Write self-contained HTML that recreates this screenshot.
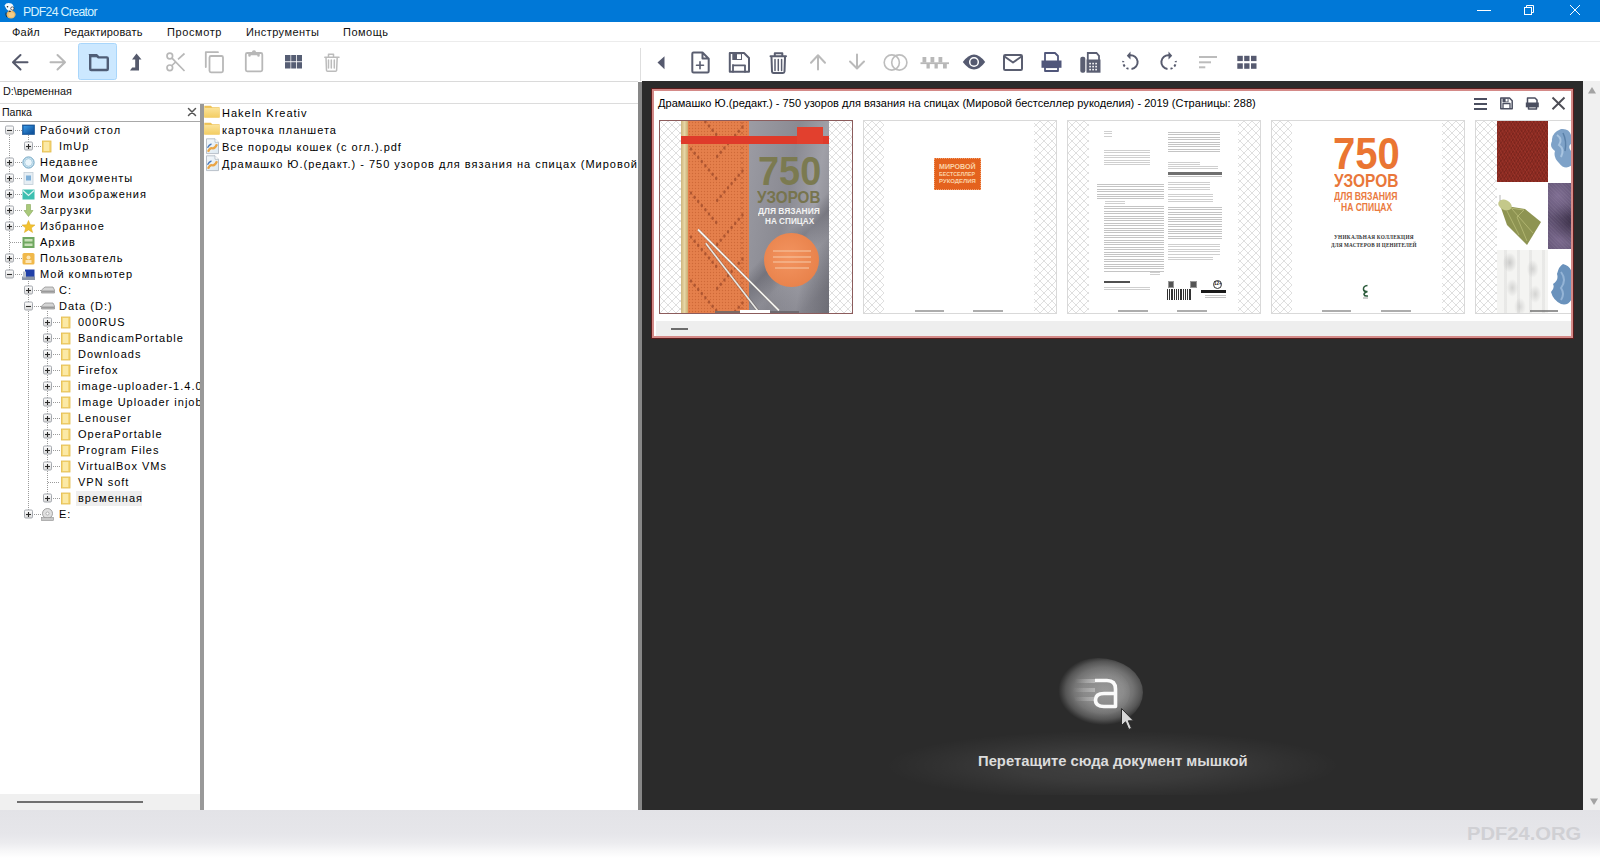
<!DOCTYPE html>
<html><head><meta charset="utf-8">
<style>
*{margin:0;padding:0;box-sizing:border-box}
html,body{width:1600px;height:860px;overflow:hidden;background:#fff;font-family:"Liberation Sans",sans-serif;color:#000}
.a{position:absolute}
#title{left:0;top:0;width:1600px;height:22px;background:#0078d7}
#title .t{left:23px;top:5px;font-size:12.3px;letter-spacing:-0.68px;color:#d6f3ff;white-space:nowrap}
#menu{left:0;top:22px;width:1600px;height:20px;background:#fff;border-bottom:1px solid #ececec}
#menu span{position:absolute;top:4px;font-size:11px;letter-spacing:0.2px;color:#111;white-space:nowrap}
#tbL{left:0;top:42px;width:638px;height:40px;background:#fff;border-bottom:1px solid #dadada}
#tbR{left:642px;top:42px;width:958px;height:39px;background:#fff}
#addr{left:0;top:82px;width:638px;height:22px;background:#fff;border-bottom:1px solid #dcdcdc}
#addr span{position:absolute;left:3px;top:3px;font-size:10.8px;color:#111}
#tree{left:0;top:104px;width:200px;height:706px;background:#fff;overflow:hidden}
#treehdr{left:0;top:0;width:200px;height:18px;border-bottom:1px solid #a8a8a8}
#treehdr span{position:absolute;left:2px;top:2px;font-size:10.6px;color:#111}
#split1{left:200px;top:104px;width:4px;height:706px;background:#999}
#files{left:204px;top:104px;width:434px;height:706px;background:#fff;overflow:hidden}
#split2{left:638px;top:82px;width:4px;height:728px;background:#878787}
#dark{left:642px;top:81px;width:941px;height:729px;background:#2b2b2b;overflow:hidden}
#vscroll{left:1583px;top:81px;width:17px;height:729px;background:#f0f0f0}
#status{left:0;top:810px;width:1600px;height:50px;background:linear-gradient(#e3e3e7 0px,#e6e6ea 24px,#ececef 33px,#f7f7f8 41px,#fff 48px)}
#hs{left:0;top:794px;width:200px;height:16px;background:#f0f0f0}
.tt{position:absolute;font-size:11px;letter-spacing:1.0px;color:#000;white-space:nowrap}
</style></head><body>
<div id="title" class="a"><span class="t a">PDF24 Creator</span></div>
<div id="menu" class="a">
<span style="left:12px">Файл</span><span style="left:64px">Редактировать</span><span style="left:167px;letter-spacing:0.6px">Просмотр</span><span style="left:246px;letter-spacing:0.42px">Инструменты</span><span style="left:343px;letter-spacing:0.5px">Помощь</span>
</div>
<div id="tbL" class="a"></div>
<div id="tbR" class="a"></div>
<div id="addr" class="a"><span>D:\временная</span></div>
<div id="tree" class="a">
 <div id="treehdr" class="a"><span>Папка</span></div>
<svg class="a" style="left:0;top:0" width="200" height="706"><defs><linearGradient id="bg" x1="0" y1="0" x2="0" y2="1"><stop offset="0" stop-color="#fff"/><stop offset="1" stop-color="#dcdcdc"/></linearGradient><linearGradient id="dk" x1="0" y1="0" x2="1" y2="1"><stop offset="0" stop-color="#3a9ae8"/><stop offset="1" stop-color="#0c4a90"/></linearGradient></defs><line x1="9.5" y1="31" x2="9.5" y2="170.5" stroke="#9a9a9a" stroke-width="1" stroke-dasharray="1 1"/><line x1="28.5" y1="31" x2="28.5" y2="38.5" stroke="#9a9a9a" stroke-width="1" stroke-dasharray="1 1"/><line x1="28.5" y1="175" x2="28.5" y2="410.5" stroke="#9a9a9a" stroke-width="1" stroke-dasharray="1 1"/><line x1="47.5" y1="207" x2="47.5" y2="394.5" stroke="#9a9a9a" stroke-width="1" stroke-dasharray="1 1"/><line x1="15" y1="26.5" x2="22" y2="26.5" stroke="#9a9a9a" stroke-width="1" stroke-dasharray="1 1"/><rect x="5.5" y="22.0" width="8" height="8" fill="url(#bg)" stroke="#a4a8ae" rx="1.2"/><path d="M7 26.5H12" stroke="#2a2a2a" stroke-width="1.1"/><rect x="22.5" y="21.0" width="12" height="9.5" fill="#0f5aa8" stroke="#2a5f98" stroke-width="0.8"/><rect x="23.5" y="22.0" width="10" height="7.5" fill="url(#dk)"/><line x1="34" y1="42.5" x2="41" y2="42.5" stroke="#9a9a9a" stroke-width="1" stroke-dasharray="1 1"/><rect x="24.5" y="38.0" width="8" height="8" fill="url(#bg)" stroke="#a4a8ae" rx="1.2"/><path d="M26 42.5H31" stroke="#2a2a2a" stroke-width="1.1"/><path d="M28.5 40.0V45.0" stroke="#2a2a2a" stroke-width="1.1"/><rect x="42.5" y="37.0" width="8.5" height="11" fill="#f6d879" stroke="#e2b94a" stroke-width="0.8"/><rect x="44" y="38.0" width="5" height="9" fill="#fbe9a6"/><line x1="15" y1="58.5" x2="22" y2="58.5" stroke="#9a9a9a" stroke-width="1" stroke-dasharray="1 1"/><rect x="5.5" y="54.0" width="8" height="8" fill="url(#bg)" stroke="#a4a8ae" rx="1.2"/><path d="M7 58.5H12" stroke="#2a2a2a" stroke-width="1.1"/><path d="M9.5 56.0V61.0" stroke="#2a2a2a" stroke-width="1.1"/><circle cx="28.5" cy="58.5" r="5.6" fill="#cfe6f2" stroke="#6da3c2" stroke-width="1"/><circle cx="28.5" cy="58.5" r="3.8" fill="#eaf5fb" stroke="#8ab8d2" stroke-width="0.6"/><line x1="15" y1="74.5" x2="22" y2="74.5" stroke="#9a9a9a" stroke-width="1" stroke-dasharray="1 1"/><rect x="5.5" y="70.0" width="8" height="8" fill="url(#bg)" stroke="#a4a8ae" rx="1.2"/><path d="M7 74.5H12" stroke="#2a2a2a" stroke-width="1.1"/><path d="M9.5 72.0V77.0" stroke="#2a2a2a" stroke-width="1.1"/><rect x="24" y="68.5" width="9" height="12" fill="#e6eef4" stroke="#c0ccd6" stroke-width="0.8"/><rect x="26" y="71.5" width="5" height="5" fill="#7fb0d8"/><line x1="15" y1="90.5" x2="22" y2="90.5" stroke="#9a9a9a" stroke-width="1" stroke-dasharray="1 1"/><rect x="5.5" y="86.0" width="8" height="8" fill="url(#bg)" stroke="#a4a8ae" rx="1.2"/><path d="M7 90.5H12" stroke="#2a2a2a" stroke-width="1.1"/><path d="M9.5 88.0V93.0" stroke="#2a2a2a" stroke-width="1.1"/><rect x="22.5" y="85.5" width="12" height="10" fill="#3cbfb0"/><path d="M23 86.5L28.5 91.5L34 86.5" fill="none" stroke="#dff5f2" stroke-width="1.2"/><line x1="15" y1="106.5" x2="22" y2="106.5" stroke="#9a9a9a" stroke-width="1" stroke-dasharray="1 1"/><rect x="5.5" y="102.0" width="8" height="8" fill="url(#bg)" stroke="#a4a8ae" rx="1.2"/><path d="M7 106.5H12" stroke="#2a2a2a" stroke-width="1.1"/><path d="M9.5 104.0V109.0" stroke="#2a2a2a" stroke-width="1.1"/><path d="M26.5 100.5H30.5V106.5H33L28.5 112.5L24 106.5H26.5Z" fill="#a9c97a" stroke="#86a85a" stroke-width="0.6"/><line x1="15" y1="122.5" x2="22" y2="122.5" stroke="#9a9a9a" stroke-width="1" stroke-dasharray="1 1"/><rect x="5.5" y="118.0" width="8" height="8" fill="url(#bg)" stroke="#a4a8ae" rx="1.2"/><path d="M7 122.5H12" stroke="#2a2a2a" stroke-width="1.1"/><path d="M9.5 120.0V125.0" stroke="#2a2a2a" stroke-width="1.1"/><path d="M28.5 116.5L30.3 120.8L35 121.0L31.3 123.9L32.6 128.5L28.5 125.9L24.4 128.5L25.7 123.9L22 121.0L26.7 120.8Z" fill="#f2c230" stroke="#d9a520" stroke-width="0.5"/><line x1="10" y1="138.5" x2="22" y2="138.5" stroke="#9a9a9a" stroke-width="1" stroke-dasharray="1 1"/><rect x="22.5" y="133.0" width="12" height="11" fill="#6fa760"/><rect x="24.5" y="135.0" width="8" height="2.5" fill="#c9e0b8"/><rect x="24.5" y="139.5" width="8" height="2.5" fill="#c9e0b8"/><line x1="15" y1="154.5" x2="22" y2="154.5" stroke="#9a9a9a" stroke-width="1" stroke-dasharray="1 1"/><rect x="5.5" y="150.0" width="8" height="8" fill="url(#bg)" stroke="#a4a8ae" rx="1.2"/><path d="M7 154.5H12" stroke="#2a2a2a" stroke-width="1.1"/><path d="M9.5 152.0V157.0" stroke="#2a2a2a" stroke-width="1.1"/><rect x="22.5" y="149.0" width="12" height="11.5" rx="1.5" fill="#f0b84a"/><circle cx="28.5" cy="153.5" r="2" fill="#fbe6b8"/><rect x="25.5" y="156.0" width="6" height="3" fill="#fbe6b8"/><line x1="15" y1="170.5" x2="22" y2="170.5" stroke="#9a9a9a" stroke-width="1" stroke-dasharray="1 1"/><rect x="5.5" y="166.0" width="8" height="8" fill="url(#bg)" stroke="#a4a8ae" rx="1.2"/><path d="M7 170.5H12" stroke="#2a2a2a" stroke-width="1.1"/><rect x="25" y="165.5" width="9.5" height="7.5" fill="#1f3fa8"/><rect x="22" y="172.5" width="13" height="3.5" fill="#8a95a8"/><rect x="23" y="167.5" width="3" height="6" fill="#b8c0cc"/><line x1="34" y1="186.5" x2="41" y2="186.5" stroke="#9a9a9a" stroke-width="1" stroke-dasharray="1 1"/><rect x="24.5" y="182.0" width="8" height="8" fill="url(#bg)" stroke="#a4a8ae" rx="1.2"/><path d="M26 186.5H31" stroke="#2a2a2a" stroke-width="1.1"/><path d="M28.5 184.0V189.0" stroke="#2a2a2a" stroke-width="1.1"/><path d="M41.5 186.0L45 183.0H53L54.5 186.0V189.0H41.5Z" fill="#d4d4d4" stroke="#8a8a8a" stroke-width="0.7"/><rect x="42" y="186.5" width="12" height="2" fill="#9a9a9a"/><line x1="34" y1="202.5" x2="41" y2="202.5" stroke="#9a9a9a" stroke-width="1" stroke-dasharray="1 1"/><rect x="24.5" y="198.0" width="8" height="8" fill="url(#bg)" stroke="#a4a8ae" rx="1.2"/><path d="M26 202.5H31" stroke="#2a2a2a" stroke-width="1.1"/><path d="M41.5 202.0L45 199.0H53L54.5 202.0V205.0H41.5Z" fill="#d4d4d4" stroke="#8a8a8a" stroke-width="0.7"/><rect x="42" y="202.5" width="12" height="2" fill="#9a9a9a"/><line x1="53" y1="218.5" x2="60" y2="218.5" stroke="#9a9a9a" stroke-width="1" stroke-dasharray="1 1"/><rect x="43.5" y="214.0" width="8" height="8" fill="url(#bg)" stroke="#a4a8ae" rx="1.2"/><path d="M45 218.5H50" stroke="#2a2a2a" stroke-width="1.1"/><path d="M47.5 216.0V221.0" stroke="#2a2a2a" stroke-width="1.1"/><rect x="61.5" y="213.0" width="8.5" height="11" fill="#f6d879" stroke="#e2b94a" stroke-width="0.8"/><rect x="63" y="214.0" width="5" height="9" fill="#fbe9a6"/><line x1="53" y1="234.5" x2="60" y2="234.5" stroke="#9a9a9a" stroke-width="1" stroke-dasharray="1 1"/><rect x="43.5" y="230.0" width="8" height="8" fill="url(#bg)" stroke="#a4a8ae" rx="1.2"/><path d="M45 234.5H50" stroke="#2a2a2a" stroke-width="1.1"/><path d="M47.5 232.0V237.0" stroke="#2a2a2a" stroke-width="1.1"/><rect x="61.5" y="229.0" width="8.5" height="11" fill="#f6d879" stroke="#e2b94a" stroke-width="0.8"/><rect x="63" y="230.0" width="5" height="9" fill="#fbe9a6"/><line x1="53" y1="250.5" x2="60" y2="250.5" stroke="#9a9a9a" stroke-width="1" stroke-dasharray="1 1"/><rect x="43.5" y="246.0" width="8" height="8" fill="url(#bg)" stroke="#a4a8ae" rx="1.2"/><path d="M45 250.5H50" stroke="#2a2a2a" stroke-width="1.1"/><path d="M47.5 248.0V253.0" stroke="#2a2a2a" stroke-width="1.1"/><rect x="61.5" y="245.0" width="8.5" height="11" fill="#f6d879" stroke="#e2b94a" stroke-width="0.8"/><rect x="63" y="246.0" width="5" height="9" fill="#fbe9a6"/><line x1="53" y1="266.5" x2="60" y2="266.5" stroke="#9a9a9a" stroke-width="1" stroke-dasharray="1 1"/><rect x="43.5" y="262.0" width="8" height="8" fill="url(#bg)" stroke="#a4a8ae" rx="1.2"/><path d="M45 266.5H50" stroke="#2a2a2a" stroke-width="1.1"/><path d="M47.5 264.0V269.0" stroke="#2a2a2a" stroke-width="1.1"/><rect x="61.5" y="261.0" width="8.5" height="11" fill="#f6d879" stroke="#e2b94a" stroke-width="0.8"/><rect x="63" y="262.0" width="5" height="9" fill="#fbe9a6"/><line x1="53" y1="282.5" x2="60" y2="282.5" stroke="#9a9a9a" stroke-width="1" stroke-dasharray="1 1"/><rect x="43.5" y="278.0" width="8" height="8" fill="url(#bg)" stroke="#a4a8ae" rx="1.2"/><path d="M45 282.5H50" stroke="#2a2a2a" stroke-width="1.1"/><path d="M47.5 280.0V285.0" stroke="#2a2a2a" stroke-width="1.1"/><rect x="61.5" y="277.0" width="8.5" height="11" fill="#f6d879" stroke="#e2b94a" stroke-width="0.8"/><rect x="63" y="278.0" width="5" height="9" fill="#fbe9a6"/><line x1="53" y1="298.5" x2="60" y2="298.5" stroke="#9a9a9a" stroke-width="1" stroke-dasharray="1 1"/><rect x="43.5" y="294.0" width="8" height="8" fill="url(#bg)" stroke="#a4a8ae" rx="1.2"/><path d="M45 298.5H50" stroke="#2a2a2a" stroke-width="1.1"/><path d="M47.5 296.0V301.0" stroke="#2a2a2a" stroke-width="1.1"/><rect x="61.5" y="293.0" width="8.5" height="11" fill="#f6d879" stroke="#e2b94a" stroke-width="0.8"/><rect x="63" y="294.0" width="5" height="9" fill="#fbe9a6"/><line x1="53" y1="314.5" x2="60" y2="314.5" stroke="#9a9a9a" stroke-width="1" stroke-dasharray="1 1"/><rect x="43.5" y="310.0" width="8" height="8" fill="url(#bg)" stroke="#a4a8ae" rx="1.2"/><path d="M45 314.5H50" stroke="#2a2a2a" stroke-width="1.1"/><path d="M47.5 312.0V317.0" stroke="#2a2a2a" stroke-width="1.1"/><rect x="61.5" y="309.0" width="8.5" height="11" fill="#f6d879" stroke="#e2b94a" stroke-width="0.8"/><rect x="63" y="310.0" width="5" height="9" fill="#fbe9a6"/><line x1="53" y1="330.5" x2="60" y2="330.5" stroke="#9a9a9a" stroke-width="1" stroke-dasharray="1 1"/><rect x="43.5" y="326.0" width="8" height="8" fill="url(#bg)" stroke="#a4a8ae" rx="1.2"/><path d="M45 330.5H50" stroke="#2a2a2a" stroke-width="1.1"/><path d="M47.5 328.0V333.0" stroke="#2a2a2a" stroke-width="1.1"/><rect x="61.5" y="325.0" width="8.5" height="11" fill="#f6d879" stroke="#e2b94a" stroke-width="0.8"/><rect x="63" y="326.0" width="5" height="9" fill="#fbe9a6"/><line x1="53" y1="346.5" x2="60" y2="346.5" stroke="#9a9a9a" stroke-width="1" stroke-dasharray="1 1"/><rect x="43.5" y="342.0" width="8" height="8" fill="url(#bg)" stroke="#a4a8ae" rx="1.2"/><path d="M45 346.5H50" stroke="#2a2a2a" stroke-width="1.1"/><path d="M47.5 344.0V349.0" stroke="#2a2a2a" stroke-width="1.1"/><rect x="61.5" y="341.0" width="8.5" height="11" fill="#f6d879" stroke="#e2b94a" stroke-width="0.8"/><rect x="63" y="342.0" width="5" height="9" fill="#fbe9a6"/><line x1="53" y1="362.5" x2="60" y2="362.5" stroke="#9a9a9a" stroke-width="1" stroke-dasharray="1 1"/><rect x="43.5" y="358.0" width="8" height="8" fill="url(#bg)" stroke="#a4a8ae" rx="1.2"/><path d="M45 362.5H50" stroke="#2a2a2a" stroke-width="1.1"/><path d="M47.5 360.0V365.0" stroke="#2a2a2a" stroke-width="1.1"/><rect x="61.5" y="357.0" width="8.5" height="11" fill="#f6d879" stroke="#e2b94a" stroke-width="0.8"/><rect x="63" y="358.0" width="5" height="9" fill="#fbe9a6"/><line x1="48" y1="378.5" x2="60" y2="378.5" stroke="#9a9a9a" stroke-width="1" stroke-dasharray="1 1"/><rect x="61.5" y="373.0" width="8.5" height="11" fill="#f6d879" stroke="#e2b94a" stroke-width="0.8"/><rect x="63" y="374.0" width="5" height="9" fill="#fbe9a6"/><line x1="53" y1="394.5" x2="60" y2="394.5" stroke="#9a9a9a" stroke-width="1" stroke-dasharray="1 1"/><rect x="43.5" y="390.0" width="8" height="8" fill="url(#bg)" stroke="#a4a8ae" rx="1.2"/><path d="M45 394.5H50" stroke="#2a2a2a" stroke-width="1.1"/><path d="M47.5 392.0V397.0" stroke="#2a2a2a" stroke-width="1.1"/><rect x="61.5" y="389.0" width="8.5" height="11" fill="#f6d879" stroke="#e2b94a" stroke-width="0.8"/><rect x="63" y="390.0" width="5" height="9" fill="#fbe9a6"/><line x1="34" y1="410.5" x2="41" y2="410.5" stroke="#9a9a9a" stroke-width="1" stroke-dasharray="1 1"/><rect x="24.5" y="406.0" width="8" height="8" fill="url(#bg)" stroke="#a4a8ae" rx="1.2"/><path d="M26 410.5H31" stroke="#2a2a2a" stroke-width="1.1"/><path d="M28.5 408.0V413.0" stroke="#2a2a2a" stroke-width="1.1"/><circle cx="47.5" cy="409.5" r="5" fill="#e0e0e0" stroke="#8e8e8e" stroke-width="0.8"/><circle cx="47.5" cy="409.5" r="1.5" fill="#fff" stroke="#8e8e8e" stroke-width="0.6"/><rect x="41.5" y="413.5" width="12" height="3" fill="#c8c8c8" stroke="#8e8e8e" stroke-width="0.6"/></svg><span class="tt" style="left:40px;top:20.0px">Рабочий стол</span><span class="tt" style="left:59px;top:36.0px">ImUp</span><span class="tt" style="left:40px;top:52.0px">Недавнее</span><span class="tt" style="left:40px;top:68.0px">Мои документы</span><span class="tt" style="left:40px;top:84.0px">Мои изображения</span><span class="tt" style="left:40px;top:100.0px">Загрузки</span><span class="tt" style="left:40px;top:116.0px">Избранное</span><span class="tt" style="left:40px;top:132.0px">Архив</span><span class="tt" style="left:40px;top:148.0px">Пользователь</span><span class="tt" style="left:40px;top:164.0px">Мой компьютер</span><span class="tt" style="left:59px;top:180.0px">C:</span><span class="tt" style="left:59px;top:196.0px">Data (D:)</span><span class="tt" style="left:78px;top:212.0px">000RUS</span><span class="tt" style="left:78px;top:228.0px">BandicamPortable</span><span class="tt" style="left:78px;top:244.0px">Downloads</span><span class="tt" style="left:78px;top:260.0px">Firefox</span><span class="tt" style="left:78px;top:276.0px">image-uploader-1.4.0</span><span class="tt" style="left:78px;top:292.0px">Image Uploader injobs</span><span class="tt" style="left:78px;top:308.0px">Lenouser</span><span class="tt" style="left:78px;top:324.0px">OperaPortable</span><span class="tt" style="left:78px;top:340.0px">Program Files</span><span class="tt" style="left:78px;top:356.0px">VirtualBox VMs</span><span class="tt" style="left:78px;top:372.0px">VPN soft</span><div class="a" style="left:76px;top:387.0px;width:66px;height:15px;background:#eeeeee"></div><span class="tt" style="left:78px;top:388.0px">временная</span><span class="tt" style="left:59px;top:404.0px">E:</span>
</div>
<div id="split1" class="a"></div>
<div id="files" class="a"><svg class="a" style="left:0;top:0" width="20" height="80"><defs><linearGradient id="fg" x1="0" y1="0" x2="0" y2="1"><stop offset="0" stop-color="#fbe39a"/><stop offset="1" stop-color="#f3cd62"/></linearGradient><linearGradient id="pg" x1="0" y1="0" x2="1" y2="1"><stop offset="0" stop-color="#f4f8fb"/><stop offset="1" stop-color="#dce8f0"/></linearGradient></defs><path d="M0.3 1.7999999999999972H6.8L8.3 3.299999999999997H15.6V13.499999999999996H0.3Z" fill="#eec255"/><rect x="0.3" y="3.8999999999999972" width="15.3" height="9.6" fill="url(#fg)"/><path d="M0.3 18.799999999999997H6.8L8.3 20.299999999999997H15.6V30.499999999999996H0.3Z" fill="#eec255"/><rect x="0.3" y="20.9" width="15.3" height="9.6" fill="url(#fg)"/><path d="M2.5 34.80000000000001H11L14.5 38.30000000000001V49.60000000000001H2.5Z" fill="url(#pg)" stroke="#a9b3bd" stroke-width="0.8"/><path d="M11 34.80000000000001V38.30000000000001H14.5" fill="#fff" stroke="#a9b3bd" stroke-width="0.7"/><path d="M4 47.80000000000001Q6 43.30000000000001 8.5 44.30000000000001Q11 44.80000000000001 13 40.30000000000001" fill="none" stroke="#eaa545" stroke-width="2.2"/><path d="M3.5 43.80000000000001Q5 40.80000000000001 7.5 39.80000000000001" fill="none" stroke="#4a78b8" stroke-width="1.3"/><path d="M2.5 51.80000000000001H11L14.5 55.30000000000001V66.60000000000001H2.5Z" fill="url(#pg)" stroke="#a9b3bd" stroke-width="0.8"/><path d="M11 51.80000000000001V55.30000000000001H14.5" fill="#fff" stroke="#a9b3bd" stroke-width="0.7"/><path d="M4 64.80000000000001Q6 60.30000000000001 8.5 61.30000000000001Q11 61.80000000000001 13 57.30000000000001" fill="none" stroke="#eaa545" stroke-width="2.2"/><path d="M3.5 60.80000000000001Q5 57.80000000000001 7.5 56.80000000000001" fill="none" stroke="#4a78b8" stroke-width="1.3"/></svg><span class="tt" style="left:18px;top:3px">Hakeln Kreativ</span><span class="tt" style="left:18px;top:20px">карточка планшета</span><span class="tt" style="left:18px;top:37px">Все породы кошек (с огл.).pdf</span><span class="tt" style="left:18px;top:54px">Драмашко Ю.(редакт.) - 750 узоров для вязания на спицах (Мировой бестселлер рукоделия) - 2019.pdf</span></div>
<div id="hs" class="a"></div>
<div id="split2" class="a"></div>
<div id="dark" class="a"><div class="a" style="left:9px;top:7px;width:923px;height:251px;background:#5a1c1c"></div><div class="a" style="left:10px;top:8px;width:921px;height:249px;background:#d48a88"></div><div class="a" style="left:12px;top:10px;width:917px;height:245px;background:#fff;overflow:hidden"></div><span class="a" style="left:16px;top:16px;font-size:11px;letter-spacing:0.03px;color:#000;white-space:nowrap">Драмашко Ю.(редакт.) - 750 узоров для вязания на спицах (Мировой бестселлер рукоделия) - 2019 (Страницы: 288)</span><div class="a" style="left:14px;top:240px;width:915px;height:15px;background:#eeeeee"></div><div class="a" style="left:29px;top:247px;width:17px;height:2px;background:#6b6b6b"></div><svg width="0" height="0" style="position:absolute"><defs><pattern id="chk" x="0" y="0" width="8" height="8" patternUnits="userSpaceOnUse"><path d="M0 0L8 8M8 0L0 8" stroke="#d4d4d4" stroke-width="0.75"/></pattern></defs></svg><div class="a" style="left:12px;top:10px;width:917px;height:229px;overflow:hidden"><div class="a" style="left:5px;top:29px;width:194px;height:194px;border:1px solid #8c5c5c;overflow:hidden"><svg class="a" style="left:0;top:0" width="192" height="192"><rect width="192" height="192" fill="url(#chk)"/></svg><div class="a" style="left:21.00px;top:0.00px;width:148.00px;height:192.00px;background:#8f8f96"></div><div class="a" style="left:88.50px;top:0.00px;width:80.50px;height:192.00px;background:linear-gradient(100deg,#9c9ca4 0%,#8a8a92 45%,#a0a0a8 70%,#7e7e86 100%)"></div><div class="a" style="left:88.50px;top:0.00px;width:80.50px;height:192.00px;background:linear-gradient(135deg,rgba(0,0,0,0) 55%,rgba(40,40,50,.25) 62%,rgba(0,0,0,0) 72%,rgba(30,30,40,.18) 90%)"></div><div class="a" style="left:28.00px;top:0.00px;width:60.50px;height:192.00px;background:#e5804c"></div><svg class="a" style="left:28px;top:0" width="60.5" height="192"><defs><pattern id="knt" width="3" height="3" patternUnits="userSpaceOnUse"><rect width="3" height="3" fill="#e5804c"/><circle cx="1.5" cy="1.5" r="0.7" fill="#cf6a38"/></pattern></defs><rect width="60.5" height="192" fill="url(#knt)"/><ellipse cx="17.4" cy="0.8" rx="1.2" ry="1.8" fill="#9e4a2a" opacity=".75"/><ellipse cx="21.0" cy="5.0" rx="1.2" ry="1.8" fill="#9e4a2a" opacity=".75"/><ellipse cx="24.6" cy="9.2" rx="1.2" ry="1.8" fill="#9e4a2a" opacity=".75"/><ellipse cx="28.2" cy="13.4" rx="1.2" ry="1.8" fill="#9e4a2a" opacity=".75"/><ellipse cx="29.2" cy="35.4" rx="1.2" ry="1.8" fill="#9e4a2a" opacity=".75"/><ellipse cx="32.8" cy="31.2" rx="1.2" ry="1.8" fill="#9e4a2a" opacity=".75"/><ellipse cx="36.4" cy="27.0" rx="1.2" ry="1.8" fill="#9e4a2a" opacity=".75"/><ellipse cx="40.0" cy="22.8" rx="1.2" ry="1.8" fill="#9e4a2a" opacity=".75"/><ellipse cx="43.6" cy="18.6" rx="1.2" ry="1.8" fill="#9e4a2a" opacity=".75"/><ellipse cx="47.2" cy="14.4" rx="1.2" ry="1.8" fill="#9e4a2a" opacity=".75"/><ellipse cx="50.8" cy="10.2" rx="1.2" ry="1.8" fill="#9e4a2a" opacity=".75"/><ellipse cx="54.4" cy="6.0" rx="1.2" ry="1.8" fill="#9e4a2a" opacity=".75"/><ellipse cx="3.0" cy="28.0" rx="1.2" ry="1.8" fill="#9e4a2a" opacity=".75"/><ellipse cx="6.6" cy="32.2" rx="1.2" ry="1.8" fill="#9e4a2a" opacity=".75"/><ellipse cx="10.2" cy="36.4" rx="1.2" ry="1.8" fill="#9e4a2a" opacity=".75"/><ellipse cx="13.8" cy="40.6" rx="1.2" ry="1.8" fill="#9e4a2a" opacity=".75"/><ellipse cx="17.4" cy="44.8" rx="1.2" ry="1.8" fill="#9e4a2a" opacity=".75"/><ellipse cx="21.0" cy="49.0" rx="1.2" ry="1.8" fill="#9e4a2a" opacity=".75"/><ellipse cx="24.6" cy="53.2" rx="1.2" ry="1.8" fill="#9e4a2a" opacity=".75"/><ellipse cx="28.2" cy="57.4" rx="1.2" ry="1.8" fill="#9e4a2a" opacity=".75"/><ellipse cx="29.2" cy="79.4" rx="1.2" ry="1.8" fill="#9e4a2a" opacity=".75"/><ellipse cx="32.8" cy="75.2" rx="1.2" ry="1.8" fill="#9e4a2a" opacity=".75"/><ellipse cx="36.4" cy="71.0" rx="1.2" ry="1.8" fill="#9e4a2a" opacity=".75"/><ellipse cx="40.0" cy="66.8" rx="1.2" ry="1.8" fill="#9e4a2a" opacity=".75"/><ellipse cx="43.6" cy="62.6" rx="1.2" ry="1.8" fill="#9e4a2a" opacity=".75"/><ellipse cx="47.2" cy="58.4" rx="1.2" ry="1.8" fill="#9e4a2a" opacity=".75"/><ellipse cx="50.8" cy="54.2" rx="1.2" ry="1.8" fill="#9e4a2a" opacity=".75"/><ellipse cx="54.4" cy="50.0" rx="1.2" ry="1.8" fill="#9e4a2a" opacity=".75"/><ellipse cx="3.0" cy="72.0" rx="1.2" ry="1.8" fill="#9e4a2a" opacity=".75"/><ellipse cx="6.6" cy="76.2" rx="1.2" ry="1.8" fill="#9e4a2a" opacity=".75"/><ellipse cx="10.2" cy="80.4" rx="1.2" ry="1.8" fill="#9e4a2a" opacity=".75"/><ellipse cx="13.8" cy="84.6" rx="1.2" ry="1.8" fill="#9e4a2a" opacity=".75"/><ellipse cx="17.4" cy="88.8" rx="1.2" ry="1.8" fill="#9e4a2a" opacity=".75"/><ellipse cx="21.0" cy="93.0" rx="1.2" ry="1.8" fill="#9e4a2a" opacity=".75"/><ellipse cx="24.6" cy="97.2" rx="1.2" ry="1.8" fill="#9e4a2a" opacity=".75"/><ellipse cx="28.2" cy="101.4" rx="1.2" ry="1.8" fill="#9e4a2a" opacity=".75"/><ellipse cx="29.2" cy="123.4" rx="1.2" ry="1.8" fill="#9e4a2a" opacity=".75"/><ellipse cx="32.8" cy="119.2" rx="1.2" ry="1.8" fill="#9e4a2a" opacity=".75"/><ellipse cx="36.4" cy="115.0" rx="1.2" ry="1.8" fill="#9e4a2a" opacity=".75"/><ellipse cx="40.0" cy="110.8" rx="1.2" ry="1.8" fill="#9e4a2a" opacity=".75"/><ellipse cx="43.6" cy="106.6" rx="1.2" ry="1.8" fill="#9e4a2a" opacity=".75"/><ellipse cx="47.2" cy="102.4" rx="1.2" ry="1.8" fill="#9e4a2a" opacity=".75"/><ellipse cx="50.8" cy="98.2" rx="1.2" ry="1.8" fill="#9e4a2a" opacity=".75"/><ellipse cx="54.4" cy="94.0" rx="1.2" ry="1.8" fill="#9e4a2a" opacity=".75"/><ellipse cx="3.0" cy="116.0" rx="1.2" ry="1.8" fill="#9e4a2a" opacity=".75"/><ellipse cx="6.6" cy="120.2" rx="1.2" ry="1.8" fill="#9e4a2a" opacity=".75"/><ellipse cx="10.2" cy="124.4" rx="1.2" ry="1.8" fill="#9e4a2a" opacity=".75"/><ellipse cx="13.8" cy="128.6" rx="1.2" ry="1.8" fill="#9e4a2a" opacity=".75"/><ellipse cx="17.4" cy="132.8" rx="1.2" ry="1.8" fill="#9e4a2a" opacity=".75"/><ellipse cx="21.0" cy="137.0" rx="1.2" ry="1.8" fill="#9e4a2a" opacity=".75"/><ellipse cx="24.6" cy="141.2" rx="1.2" ry="1.8" fill="#9e4a2a" opacity=".75"/><ellipse cx="28.2" cy="145.4" rx="1.2" ry="1.8" fill="#9e4a2a" opacity=".75"/><ellipse cx="29.2" cy="167.4" rx="1.2" ry="1.8" fill="#9e4a2a" opacity=".75"/><ellipse cx="32.8" cy="163.2" rx="1.2" ry="1.8" fill="#9e4a2a" opacity=".75"/><ellipse cx="36.4" cy="159.0" rx="1.2" ry="1.8" fill="#9e4a2a" opacity=".75"/><ellipse cx="40.0" cy="154.8" rx="1.2" ry="1.8" fill="#9e4a2a" opacity=".75"/><ellipse cx="43.6" cy="150.6" rx="1.2" ry="1.8" fill="#9e4a2a" opacity=".75"/><ellipse cx="47.2" cy="146.4" rx="1.2" ry="1.8" fill="#9e4a2a" opacity=".75"/><ellipse cx="50.8" cy="142.2" rx="1.2" ry="1.8" fill="#9e4a2a" opacity=".75"/><ellipse cx="54.4" cy="138.0" rx="1.2" ry="1.8" fill="#9e4a2a" opacity=".75"/><ellipse cx="3.0" cy="160.0" rx="1.2" ry="1.8" fill="#9e4a2a" opacity=".75"/><ellipse cx="6.6" cy="164.2" rx="1.2" ry="1.8" fill="#9e4a2a" opacity=".75"/><ellipse cx="10.2" cy="168.4" rx="1.2" ry="1.8" fill="#9e4a2a" opacity=".75"/><ellipse cx="13.8" cy="172.6" rx="1.2" ry="1.8" fill="#9e4a2a" opacity=".75"/><ellipse cx="17.4" cy="176.8" rx="1.2" ry="1.8" fill="#9e4a2a" opacity=".75"/><ellipse cx="21.0" cy="181.0" rx="1.2" ry="1.8" fill="#9e4a2a" opacity=".75"/><ellipse cx="24.6" cy="185.2" rx="1.2" ry="1.8" fill="#9e4a2a" opacity=".75"/><ellipse cx="28.2" cy="189.4" rx="1.2" ry="1.8" fill="#9e4a2a" opacity=".75"/><ellipse cx="43.6" cy="194.6" rx="1.2" ry="1.8" fill="#9e4a2a" opacity=".75"/><ellipse cx="47.2" cy="190.4" rx="1.2" ry="1.8" fill="#9e4a2a" opacity=".75"/><ellipse cx="50.8" cy="186.2" rx="1.2" ry="1.8" fill="#9e4a2a" opacity=".75"/><ellipse cx="54.4" cy="182.0" rx="1.2" ry="1.8" fill="#9e4a2a" opacity=".75"/><circle cx="54" cy="2" r="0.9" fill="#b85a30" opacity=".7"/><circle cx="54" cy="7" r="0.9" fill="#b85a30" opacity=".7"/><circle cx="54" cy="12" r="0.9" fill="#b85a30" opacity=".7"/><circle cx="54" cy="17" r="0.9" fill="#b85a30" opacity=".7"/><circle cx="54" cy="22" r="0.9" fill="#b85a30" opacity=".7"/><circle cx="54" cy="27" r="0.9" fill="#b85a30" opacity=".7"/><circle cx="54" cy="32" r="0.9" fill="#b85a30" opacity=".7"/><circle cx="54" cy="37" r="0.9" fill="#b85a30" opacity=".7"/><circle cx="54" cy="42" r="0.9" fill="#b85a30" opacity=".7"/><circle cx="54" cy="47" r="0.9" fill="#b85a30" opacity=".7"/><circle cx="54" cy="52" r="0.9" fill="#b85a30" opacity=".7"/><circle cx="54" cy="57" r="0.9" fill="#b85a30" opacity=".7"/><circle cx="54" cy="62" r="0.9" fill="#b85a30" opacity=".7"/><circle cx="54" cy="67" r="0.9" fill="#b85a30" opacity=".7"/><circle cx="54" cy="72" r="0.9" fill="#b85a30" opacity=".7"/><circle cx="54" cy="77" r="0.9" fill="#b85a30" opacity=".7"/><circle cx="54" cy="82" r="0.9" fill="#b85a30" opacity=".7"/><circle cx="54" cy="87" r="0.9" fill="#b85a30" opacity=".7"/><circle cx="54" cy="92" r="0.9" fill="#b85a30" opacity=".7"/><circle cx="54" cy="97" r="0.9" fill="#b85a30" opacity=".7"/><circle cx="54" cy="102" r="0.9" fill="#b85a30" opacity=".7"/><circle cx="54" cy="107" r="0.9" fill="#b85a30" opacity=".7"/><circle cx="54" cy="112" r="0.9" fill="#b85a30" opacity=".7"/><circle cx="54" cy="117" r="0.9" fill="#b85a30" opacity=".7"/><circle cx="54" cy="122" r="0.9" fill="#b85a30" opacity=".7"/><circle cx="54" cy="127" r="0.9" fill="#b85a30" opacity=".7"/><circle cx="54" cy="132" r="0.9" fill="#b85a30" opacity=".7"/><circle cx="54" cy="137" r="0.9" fill="#b85a30" opacity=".7"/><circle cx="54" cy="142" r="0.9" fill="#b85a30" opacity=".7"/><circle cx="54" cy="147" r="0.9" fill="#b85a30" opacity=".7"/><circle cx="54" cy="152" r="0.9" fill="#b85a30" opacity=".7"/><circle cx="54" cy="157" r="0.9" fill="#b85a30" opacity=".7"/><circle cx="54" cy="162" r="0.9" fill="#b85a30" opacity=".7"/><circle cx="54" cy="167" r="0.9" fill="#b85a30" opacity=".7"/><circle cx="54" cy="172" r="0.9" fill="#b85a30" opacity=".7"/><circle cx="54" cy="177" r="0.9" fill="#b85a30" opacity=".7"/><circle cx="54" cy="182" r="0.9" fill="#b85a30" opacity=".7"/><circle cx="54" cy="187" r="0.9" fill="#b85a30" opacity=".7"/></svg><div class="a" style="left:21.00px;top:0.00px;width:7.00px;height:192.00px;background:linear-gradient(90deg,#cdb57c,#e6d6a6 50%,#c9ad72)"></div><div class="a" style="left:21.00px;top:15.00px;width:148.00px;height:7.60px;background:#df3a2a"></div><div class="a" style="left:137.40px;top:5.70px;width:25.60px;height:16.90px;background:#e2402e"></div><span class="a" style="left:98.00px;top:30.29px;white-space:nowrap;font:bold 40.99px/1 Liberation Sans;color:#7b7a50;transform:scaleX(0.925);transform-origin:0 0;">750</span><span class="a" style="left:97.30px;top:67.70px;white-space:nowrap;font:bold 17.18px/1 Liberation Sans;color:#77744e;transform:scaleX(0.886);transform-origin:0 0;">УЗОРОВ</span><span class="a" style="left:98.25px;top:85.46px;white-space:nowrap;font:bold 9.57px/1 Liberation Sans;color:#f2f2f2;transform:scaleX(0.880);transform-origin:0 0;">ДЛЯ ВЯЗАНИЯ</span><span class="a" style="left:105.00px;top:95.23px;white-space:nowrap;font:bold 9.71px/1 Liberation Sans;color:#f2f2f2;transform:scaleX(0.845);transform-origin:0 0;">НА СПИЦАХ</span><div class="a" style="left:104.00px;top:112.00px;width:54.50px;height:54.00px;border-radius:50%;background:radial-gradient(circle at 45% 45%,#f39460,#e9834c 70%,#dd7642)"></div><div class="a" style="left:113.00px;top:129.00px;width:38.00px;height:2.00px;background:#f6c4a2;opacity:.55"></div><div class="a" style="left:113.00px;top:134.50px;width:38.00px;height:2.00px;background:#f6c4a2;opacity:.55"></div><div class="a" style="left:113.00px;top:140.00px;width:38.00px;height:2.00px;background:#f6c4a2;opacity:.55"></div><div class="a" style="left:115.00px;top:145.50px;width:34.00px;height:2.00px;background:#f6c4a2;opacity:.55"></div><svg class="a" style="left:0;top:0" width="192" height="192"><path d="M38 108.5L119 189.5" stroke="#5a4a44" stroke-width="3" opacity=".35"/><path d="M38 108.5L119 189.5" stroke="#f2f2ee" stroke-width="1.8"/><path d="M45.799999999999955 122.30000000000001L98 190" stroke="#5a4a44" stroke-width="3" opacity=".35"/><path d="M45.799999999999955 122.30000000000001L98 190" stroke="#e8e8e4" stroke-width="1.6"/></svg><div class="a" style="left:55.00px;top:189.50px;width:24.50px;height:2.00px;background:#7d6a64"></div><div class="a" style="left:79.50px;top:189.00px;width:30.50px;height:3.00px;background:#fff"></div><div class="a" style="left:110.00px;top:189.50px;width:29.00px;height:2.00px;background:#6d6a70"></div></div><div class="a" style="left:209px;top:29px;width:194px;height:194px;border:1px solid #d9d9d9;overflow:hidden"><svg class="a" style="left:0;top:0" width="192" height="192"><rect width="192" height="192" fill="url(#chk)"/></svg><div class="a" style="left:20.00px;top:0.00px;width:149.50px;height:192.00px;background:#fff"></div><div class="a" style="left:69.70px;top:37.10px;width:47.40px;height:32.00px;background:#e4621e;outline:1px dotted #f2a070;outline-offset:-1px"></div><span class="a" style="left:75.00px;top:42.03px;white-space:nowrap;font:bold 7.25px/1 Liberation Sans;color:#fbd3a8;transform:scaleX(0.976);transform-origin:0 0;">МИРОВОЙ</span><span class="a" style="left:75.00px;top:51.13px;white-space:nowrap;font:bold 5.36px/1 Liberation Sans;color:#fbd3a8;transform:scaleX(0.984);transform-origin:0 0;">БЕСТСЕЛЛЕР</span><span class="a" style="left:75.00px;top:57.39px;white-space:nowrap;font:bold 6.23px/1 Liberation Sans;color:#fbd3a8;transform:scaleX(0.962);transform-origin:0 0;">РУКОДЕЛИЯ</span><div class="a" style="left:51.00px;top:188.50px;width:29.00px;height:2.00px;background:#8a8a8a;opacity:.7"></div><div class="a" style="left:109.00px;top:188.50px;width:30.00px;height:2.00px;background:#8a8a8a;opacity:.7"></div></div><div class="a" style="left:413px;top:29px;width:194px;height:194px;border:1px solid #d9d9d9;overflow:hidden"><svg class="a" style="left:0;top:0" width="192" height="192"><rect width="192" height="192" fill="url(#chk)"/></svg><div class="a" style="left:20.50px;top:0.00px;width:149.00px;height:192.00px;background:#fff"></div><div class="a" style="left:36.00px;top:10.00px;width:8.00px;height:6.00px;background:repeating-linear-gradient(180deg,#cfcfcf 0,#cfcfcf 1px,transparent 1px,transparent 2.4px)"></div><div class="a" style="left:35.50px;top:29.00px;width:46.50px;height:14.50px;background:repeating-linear-gradient(180deg,#cfcfcf 0,#cfcfcf 1px,transparent 1px,transparent 2.4px)"></div><div class="a" style="left:100.00px;top:11.00px;width:52.00px;height:21.00px;background:repeating-linear-gradient(180deg,#c4c4c4 0,#c4c4c4 1px,transparent 1px,transparent 2.4px)"></div><div class="a" style="left:100.00px;top:41.00px;width:32.00px;height:3.00px;background:repeating-linear-gradient(180deg,#cfcfcf 0,#cfcfcf 1px,transparent 1px,transparent 2.4px)"></div><div class="a" style="left:100.00px;top:44.50px;width:50.00px;height:5.00px;background:repeating-linear-gradient(180deg,#cfcfcf 0,#cfcfcf 1px,transparent 1px,transparent 2.4px)"></div><div class="a" style="left:100.00px;top:51.00px;width:54.00px;height:3.00px;background:#707070"></div><div class="a" style="left:100.00px;top:54.50px;width:54.00px;height:2.50px;background:repeating-linear-gradient(180deg,#c4c4c4 0,#c4c4c4 1px,transparent 1px,transparent 2.4px)"></div><div class="a" style="left:100.00px;top:60.50px;width:42.00px;height:10.00px;background:repeating-linear-gradient(180deg,#cfcfcf 0,#cfcfcf 1px,transparent 1px,transparent 2.4px)"></div><div class="a" style="left:100.00px;top:72.50px;width:45.00px;height:10.50px;background:repeating-linear-gradient(180deg,#cfcfcf 0,#cfcfcf 1px,transparent 1px,transparent 2.4px)"></div><div class="a" style="left:100.00px;top:86.00px;width:54.00px;height:34.00px;background:repeating-linear-gradient(180deg,#c4c4c4 0,#c4c4c4 1px,transparent 1px,transparent 2.4px)"></div><div class="a" style="left:100.00px;top:123.00px;width:52.00px;height:11.00px;background:repeating-linear-gradient(180deg,#cfcfcf 0,#cfcfcf 1px,transparent 1px,transparent 2.4px)"></div><div class="a" style="left:100.00px;top:136.00px;width:45.00px;height:5.00px;background:repeating-linear-gradient(180deg,#cfcfcf 0,#cfcfcf 1px,transparent 1px,transparent 2.4px)"></div><div class="a" style="left:29.00px;top:63.00px;width:67.00px;height:16.00px;background:repeating-linear-gradient(180deg,#c4c4c4 0,#c4c4c4 1px,transparent 1px,transparent 2.4px)"></div><div class="a" style="left:36.50px;top:80.00px;width:20.50px;height:3.00px;background:repeating-linear-gradient(180deg,#cfcfcf 0,#cfcfcf 1px,transparent 1px,transparent 2.4px)"></div><div class="a" style="left:36.00px;top:85.00px;width:60.00px;height:66.00px;background:repeating-linear-gradient(180deg,#c4c4c4 0,#c4c4c4 1px,transparent 1px,transparent 2.4px)"></div><div class="a" style="left:82.00px;top:151.00px;width:10.00px;height:4.00px;background:repeating-linear-gradient(180deg,#cfcfcf 0,#cfcfcf 1px,transparent 1px,transparent 2.4px)"></div><div class="a" style="left:36.00px;top:160.00px;width:26.00px;height:2.00px;background:#505050"></div><div class="a" style="left:36.00px;top:165.50px;width:46.00px;height:5.50px;background:repeating-linear-gradient(180deg,#cfcfcf 0,#cfcfcf 1px,transparent 1px,transparent 2.4px)"></div><div class="a" style="left:100.50px;top:161.00px;width:4.00px;height:5.00px;background:#555;outline:1px solid #999"></div><div class="a" style="left:123.00px;top:161.00px;width:4.50px;height:5.00px;background:#555;outline:1px solid #999"></div><div class="a" style="left:145px;top:159px;width:9px;height:9px;border:1.2px solid #333;border-radius:50%;font:bold 4.5px/6.5px 'Liberation Sans';text-align:center;color:#222">12+</div><div class="a" style="left:99.00px;top:167.50px;width:25.00px;height:11.00px;background:repeating-linear-gradient(90deg,#333 0,#333 1px,#fff 1px,#fff 1.8px)"></div><div class="a" style="left:133.00px;top:169.00px;width:25.00px;height:3.00px;background:#1a1a1a"></div><div class="a" style="left:137.00px;top:174.00px;width:21.00px;height:3.00px;background:repeating-linear-gradient(180deg,#c4c4c4 0,#c4c4c4 1px,transparent 1px,transparent 2.4px)"></div><div class="a" style="left:50.00px;top:188.50px;width:30.00px;height:2.00px;background:#8a8a8a;opacity:.7"></div><div class="a" style="left:109.00px;top:188.50px;width:30.00px;height:2.00px;background:#8a8a8a;opacity:.7"></div></div><div class="a" style="left:617px;top:29px;width:194px;height:194px;border:1px solid #d9d9d9;overflow:hidden"><svg class="a" style="left:0;top:0" width="192" height="192"><rect width="192" height="192" fill="url(#chk)"/></svg><div class="a" style="left:20.00px;top:0.00px;width:149.50px;height:192.00px;background:#fff"></div><span class="a" style="left:60.60px;top:12.31px;white-space:nowrap;font:bold 43.52px/1 Liberation Sans;color:#ea7532;transform:scaleX(0.920);transform-origin:0 0;">750</span><span class="a" style="left:61.60px;top:50.70px;white-space:nowrap;font:bold 18.45px/1 Liberation Sans;color:#e9773a;transform:scaleX(0.838);transform-origin:0 0;">УЗОРОВ</span><span class="a" style="left:62.00px;top:70.09px;white-space:nowrap;font:bold 10.58px/1 Liberation Sans;color:#ea7a40;transform:scaleX(0.817);transform-origin:0 0;">ДЛЯ ВЯЗАНИЯ</span><span class="a" style="left:69.00px;top:80.59px;white-space:nowrap;font:bold 10.58px/1 Liberation Sans;color:#ea7a40;transform:scaleX(0.807);transform-origin:0 0;">НА СПИЦАХ</span><span class="a" style="left:61.50px;top:113.00px;white-space:nowrap;font:bold 6.2px/1 Liberation Serif;color:#333;transform:scaleX(0.85);transform-origin:0 0;letter-spacing:0.3px">УНИКАЛЬНАЯ КОЛЛЕКЦИЯ</span><span class="a" style="left:59.00px;top:121.00px;white-space:nowrap;font:bold 6.2px/1 Liberation Serif;color:#333;transform:scaleX(0.83);transform-origin:0 0;letter-spacing:0.2px">ДЛЯ МАСТЕРОВ И ЦЕНИТЕЛЕЙ</span><svg class="a" style="left:89px;top:163px" width="10" height="16"><path d="M6.5 1.5Q2 2 2.5 5.5Q3 8 6.5 7.5Q3 8.5 3 10.5Q3.5 12.5 7 12" fill="none" stroke="#2a5a3a" stroke-width="1.5"/><rect x="2" y="13.5" width="5" height="1" fill="#999"/></svg><div class="a" style="left:50.00px;top:188.50px;width:29.00px;height:2.00px;background:#8a8a8a;opacity:.7"></div><div class="a" style="left:109.00px;top:188.50px;width:30.00px;height:2.00px;background:#8a8a8a;opacity:.7"></div></div><div class="a" style="left:821px;top:29px;width:194px;height:194px;border:1px solid #d9d9d9;overflow:hidden"><svg class="a" style="left:0;top:0" width="192" height="192"><rect width="192" height="192" fill="url(#chk)"/></svg><div class="a" style="left:21.00px;top:0.00px;width:83.00px;height:192.00px;background:#fff"></div><div class="a" style="left:21.00px;top:0.00px;width:50.50px;height:60.50px;background-color:#8b2a21;background-image:repeating-linear-gradient(60deg,rgba(255,120,100,.10) 0,rgba(255,120,100,.10) 1px,transparent 1px,transparent 3px),repeating-linear-gradient(-60deg,rgba(0,0,0,.10) 0,rgba(0,0,0,.10) 1px,transparent 1px,transparent 3px)"></div><div class="a" style="left:71.60px;top:62.30px;width:32.40px;height:66.00px;background-color:#5e5070;background-image:radial-gradient(circle at 30% 20%,rgba(160,140,180,.5),transparent 40%),radial-gradient(circle at 70% 60%,rgba(40,30,50,.6),transparent 45%),radial-gradient(circle at 40% 85%,rgba(150,130,170,.5),transparent 40%),repeating-linear-gradient(45deg,rgba(255,255,255,.06) 0,rgba(255,255,255,.06) 1px,transparent 1px,transparent 2.5px)"></div><div class="a" style="left:21.00px;top:129.00px;width:50.50px;height:63.00px;background-color:#f4f4f2;background-image:radial-gradient(ellipse 7px 10px at 25% 20%,rgba(140,140,140,.4),transparent),radial-gradient(ellipse 6px 9px at 70% 30%,rgba(150,150,150,.35),transparent),radial-gradient(ellipse 6px 9px at 30% 60%,rgba(150,150,150,.35),transparent),radial-gradient(ellipse 6px 9px at 75% 70%,rgba(150,150,150,.35),transparent),radial-gradient(ellipse 6px 9px at 45% 90%,rgba(150,150,150,.3),transparent),repeating-linear-gradient(90deg,transparent 0,transparent 7px,rgba(180,180,180,.18) 7px,rgba(180,180,180,.18) 10px,transparent 10px,transparent 12.5px)"></div><svg class="a" style="left:21px;top:74px" width="50" height="55"><path d="M3 10L28 14L44 27L30 50L10 30Z" fill="#8e9452"/><path d="M6 12L27 15L20 22L30 46M10 16L22 40M15 14L36 38" stroke="#b0b470" stroke-width="1" fill="none"/><ellipse cx="8" cy="10" rx="7" ry="5" fill="#c4c88a" transform="rotate(25 8 10)"/><path d="M3 0V6" stroke="#888" stroke-width="0.6"/></svg><svg class="a" style="left:73px;top:6px" width="23" height="46"><path d="M12 2Q20 1 22 8L23 16Q18 19 22 24L23 38Q16 44 10 36Q4 30 6 24Q0 20 3 14Q2 6 12 2Z" fill="#7ea2c8"/><path d="M8 8Q14 12 10 18Q16 22 12 30" stroke="#a8c4e0" stroke-width="2" fill="none"/><path d="M14 6Q18 14 16 24" stroke="#5a80a8" stroke-width="1.5" fill="none"/></svg><svg class="a" style="left:73px;top:141px" width="23" height="46"><path d="M14 2Q22 4 23 12V36Q20 44 12 42Q4 38 2 30Q6 26 4 22Q10 18 8 12Q10 4 14 2Z" fill="#6a92bc"/><path d="M12 10Q18 18 12 26Q16 32 12 38" stroke="#94b4d6" stroke-width="2" fill="none"/></svg><div class="a" style="left:54.00px;top:188.50px;width:28.00px;height:2.00px;background:#6a6a6a;opacity:.7"></div></div></div><div class="a" style="left:243px;top:644px;width:455px;height:70px;background:radial-gradient(ellipse 50% 50% at 50% 58%,rgba(255,255,255,0.10) 0%,rgba(255,255,255,0.075) 45%,rgba(255,255,255,0.03) 75%,rgba(255,255,255,0) 100%)"></div><div class="a" style="left:411px;top:577px;width:90px;height:69px;border-radius:50%;background:radial-gradient(ellipse 50% 50% at 56% 47%,#8c8c8c 0%,#848484 45%,#737373 66%,#555 84%,#3a3a3a 94%,rgba(43,43,43,0) 100%)"></div><div class="a" style="left:430px;top:587px;width:58px;height:48px;border-radius:50%;background:radial-gradient(ellipse at 60% 50%,rgba(255,255,255,0.12),rgba(255,255,255,0) 70%)"></div><div class="a" style="left:433px;top:598px;width:20px;height:4px;background:linear-gradient(90deg,rgba(200,200,200,0),rgba(220,220,220,.55))"></div><div class="a" style="left:431px;top:607px;width:22px;height:4px;background:linear-gradient(90deg,rgba(200,200,200,0),rgba(220,220,220,.45))"></div><div class="a" style="left:432px;top:616px;width:21px;height:4px;background:linear-gradient(90deg,rgba(200,200,200,0),rgba(220,220,220,.45))"></div><svg class="a" style="left:448px;top:594px" width="32" height="38"><path d="M5 5.5H17Q25.5 5.5 25.5 14V31.5H14Q5.5 31.5 5.5 25Q5.5 18.5 14 18.5H25" fill="none" stroke="#fafafa" stroke-width="3.6" stroke-linejoin="round"/></svg><svg class="a" style="left:478px;top:626px" width="16" height="26"><path d="M1.5 1.5V18.5L5.5 14.8L8.8 22.5L11.5 21.3L8.3 13.8H13.5Z" fill="#d8d8d8" stroke="#2b2b2b" stroke-width="1"/></svg><span class="a" style="left:335.50px;top:671.84px;white-space:nowrap;font:bold 15.22px/1 Liberation Sans;color:#dcdcdc;transform:scaleX(0.972);transform-origin:0 0;">Перетащите сюда документ мышкой</span></div>
<div id="vscroll" class="a"><svg class="a" style="left:0;top:0" width="17" height="729"><path d="M5 12.5L9 6L13 12.5Z" fill="#a3a3a3"/><path d="M7 717.5L11 724L15 717.5Z" fill="#a3a3a3"/></svg>
</div>
<div id="status" class="a"><span class="a" style="left:1467.00px;top:14.55px;white-space:nowrap;font:bold 18.17px/1 Liberation Sans;color:#d0d0d4;transform:scaleX(1.110);transform-origin:0 0;">PDF24.ORG</span><div class="a" style="left:17px;top:-9px;width:126px;height:2px;background:#707070"></div></div>
<svg class="a" style="left:0;top:0" width="1600" height="860" viewBox="0 0 1600 860">
 
 <!-- app icon -->
 <ellipse cx="11" cy="14.5" rx="4.6" ry="4" fill="#e9b868"/>
 <ellipse cx="11.3" cy="14.8" rx="3" ry="2.6" fill="#f3cd88"/>
 <path d="M4.5 5.5Q6 2.5 10 3.2Q13 3.5 13.5 6.5Q14.5 8.5 13 10.5Q10.5 12 8 10.5Q6 9 4.5 5.5Z" fill="#f4fbff"/>
 <circle cx="12.3" cy="8.5" r="1.6" fill="#fff" stroke="#222" stroke-width="0.7"/>
 <circle cx="7.5" cy="6.8" r="0.8" fill="#222"/>
 <ellipse cx="9.8" cy="11.3" rx="1.2" ry="0.7" fill="#3a2a22"/>
 <path d="M6 12.5Q5.5 15 6.8 17.2" stroke="#222" stroke-width="0.8" fill="none"/>
 <!-- tree header close -->
 <path d="M188.5 108.5L195.5 115.5M195.5 108.5L188.5 115.5" stroke="#555" stroke-width="1.5" stroke-linecap="round"/>

 <!-- doc header icons -->
 <g stroke="#4b4f60" stroke-width="2">
  <line x1="1474" y1="99" x2="1487" y2="99"/><line x1="1474" y1="104" x2="1487" y2="104"/><line x1="1474" y1="109" x2="1487" y2="109"/>
 </g>
 <g fill="none" stroke="#4b4f60" stroke-width="1.5" stroke-linejoin="round">
  <path d="M1500.8 98H1509.5L1512.2 100.7V108.8H1500.8Z"/>
  <path d="M1503 108.8V103.5H1510V108.8" stroke-width="1.3"/>
  <path d="M1527.5 103V98H1535L1537 100V103"/>
  <path d="M1528.5 106.5V109H1536.5V106.5"/>
 </g>
 <path d="M1502.5 98.2H1508.5V102.3H1502.5Z M1505.6 98.8V101.5H1507.6V98.8Z" fill="#4b4f60" fill-rule="evenodd"/>
 <path d="M1525.8 102.5H1538.8V107.3H1525.8Z" fill="#4b4f60"/>
 <rect x="1528" y="106" width="8.5" height="1.2" fill="#4b4f60"/>
 <path d="M1552.5 97.5L1564.5 109.3M1564.5 97.5L1552.5 109.3" stroke="#4d4d55" stroke-width="1.9"/>
 <!-- window controls -->
 <g stroke="#fff" fill="none" stroke-width="1">
  <line x1="1477" y1="10.5" x2="1491" y2="10.5"/>
  <rect x="1524.5" y="7.5" width="7" height="7"/>
  <path d="M1526.5 7.5V5.5H1533.5V12.5H1531.5"/>
  <path d="M1570 5L1580 15M1580 5L1570 15"/>
 </g>
 <!-- selected button -->
 <rect x="78.5" y="43.5" width="38" height="36" rx="2" fill="#cce8ff" stroke="#a9d6fb"/>
 <g fill="none" stroke-linecap="round" stroke-linejoin="round">
  <!-- back -->
  <path d="M20.5 55L13 62.3L20.5 69.5M13.5 62.3H27.5" stroke="#55596b" stroke-width="2"/>
  <!-- forward -->
  <path d="M57.5 55L65 62.3L57.5 69.5M50.5 62.3H64.5" stroke="#b8b8b8" stroke-width="2"/>
  <!-- folder -->
  <path d="M90.2 55.2H96.5L98.5 57.4H106.8Q107.8 57.4 107.8 58.4V69Q107.8 70 106.8 70H91.2Q90.2 70 90.2 69Z" stroke="#4f5d76" stroke-width="2.4"/><path d="M89.5 54.5H96.8L98.8 56.8H90.5Z" fill="#4f5d76" stroke="#4f5d76" stroke-width="1"/>
 </g>
 <!-- up arrow -->
 <path d="M136.5 53.6L141.5 59.6H139V70.5H130L132.2 67.5H135.2V59.6H132Z" fill="#555a6c"/>
 <!-- scissors -->
 <g fill="none" stroke="#b8b8b8" stroke-width="1.7">
  <circle cx="169.8" cy="56" r="2.8"/><circle cx="169.8" cy="67.8" r="2.8"/>
  <path d="M172 58.2L184.5 71M178 59.3L184.5 53.5M172 65.5L176 61.5"/>
 </g>
 <!-- copy -->
 <g fill="none" stroke="#b8b8b8" stroke-width="1.8" stroke-linecap="round" stroke-linejoin="round">
  <path d="M205.8 67V52.2H218"/>
  <rect x="209.5" y="56" width="13.5" height="16.3" rx="1.5"/>
  <!-- clipboard -->
  <rect x="245.8" y="53" width="16.5" height="18.3" rx="1.5"/>
  <path d="M249.5 55.5V54H258.5V55.5" stroke-width="2.5"/>
  <circle cx="254" cy="52.3" r="1.2"/>
 </g>
 <!-- grid -->
 <g fill="#565e74">
  <rect x="285" y="55" width="5.5" height="6.3"/><rect x="291.2" y="55" width="5" height="6.3"/><rect x="297" y="55" width="5" height="6.3"/>
  <rect x="285" y="62.2" width="5.5" height="6.3"/><rect x="291.2" y="62.2" width="5" height="6.3"/><rect x="297" y="62.2" width="5" height="6.3"/>
 </g>
 <!-- trash gray -->
 <g fill="none" stroke="#bcbcbc" stroke-width="1.5" stroke-linecap="round" stroke-linejoin="round">
  <path d="M324.8 57.2H339M328.5 57V54.3H333.5V57M326 57.5L326.5 70.5Q326.6 71.3 327.5 71.3H335.6Q336.5 71.3 336.6 70.5L337.2 57.5M328.5 60V68M331.3 60V68M334.3 60V68"/>
 </g>
 <!-- separator -->
 <line x1="640.5" y1="48" x2="640.5" y2="81" stroke="#dedede"/>
 <!-- left triangle -->
 <path d="M657.5 62.6L664.5 56.2V69.2Z" fill="#55596e"/>
 <g fill="none" stroke="#5a5e70" stroke-width="2" stroke-linejoin="round" stroke-linecap="round">
  <!-- new doc -->
  <path d="M702.5 52.5H693.5Q692.3 52.5 692.3 53.7V71.3Q692.3 72.5 693.5 72.5H707.5Q708.7 72.5 708.7 71.3V58.7ZM702.5 52.5V58.5H708.5"/>
  <path d="M696.5 65.3H703.5M700 61.8V68.8" stroke-width="1.6"/>
  <!-- save -->
  <path d="M729.8 53H744L749 58V71.8H729.8Z"/>
  <path d="M733 65V71.8M733 65.3H745V71.8" stroke-width="1.8"/>
 </g>
 <path d="M732.3 53H742V60H732.3Z M737 54.3V59H741V54.3Z" fill="#5a5e70" fill-rule="evenodd"/>
 <!-- trash dark -->
 <g fill="none" stroke="#5a5e70" stroke-width="2" stroke-linecap="round" stroke-linejoin="round">
  <path d="M770.5 56.3H786M774.8 56V53.2H782.3V56M771.5 57.5L772 71.5Q772.2 73 773.5 73H783Q784.4 73 784.5 71.5L785 57.5"/>
  <path d="M775 59.5V70.5M778.3 59.5V70.5M781.6 59.5V70.5" stroke-width="1.5"/>
 </g>
 <g fill="none" stroke="#bababa" stroke-width="2" stroke-linecap="round" stroke-linejoin="round">
  <!-- up -->
  <path d="M818 55.5V69.5M811 62.7L818 55.3L825 62.7"/>
  <!-- down -->
  <path d="M857 54.5V68.3M850 61.5L857 68.5L864 61.5"/>
 </g>
 <!-- circles -->
 <g fill="none" stroke="#bdbdbd" stroke-width="1.6">
  <circle cx="891.8" cy="62.5" r="7.6"/><circle cx="899.3" cy="62.5" r="7.6"/>
 </g>
 <!-- split -->
 <g fill="#b8b8b8">
  <rect x="920.5" y="62.3" width="28.5" height="1.8"/>
  <rect x="922.5" y="57" width="3.8" height="5.5"/><rect x="930.5" y="57" width="3.8" height="5.5"/><rect x="938.5" y="57" width="3.8" height="5.5"/>
  <rect x="926.5" y="63.5" width="3.3" height="5"/><rect x="934.5" y="63.5" width="3.3" height="5"/><rect x="943" y="63.5" width="3.8" height="5"/>
 </g>
 <!-- eye -->
 <path d="M962.8 62Q974 47 985.2 62Q974 77 962.8 62Z" fill="#555a70"/>
 <circle cx="974" cy="62" r="4.3" fill="none" stroke="#fff" stroke-width="1.5"/>
 <!-- mail -->
 <g fill="none" stroke="#5a5e70" stroke-width="2" stroke-linejoin="round">
  <rect x="1004" y="55" width="18" height="15" rx="1.2"/>
  <path d="M1004.5 56.5L1013 62.5L1021.5 56.5"/>
 </g>
 <!-- printer -->
 <g fill="none" stroke="#50567a" stroke-width="1.8" stroke-linejoin="round">
  <path d="M1045 61V53H1055L1058 56V61"/>
  <path d="M1045 66V71H1058V66"/>
 </g>
 <path d="M1041.5 60.5H1061.5V67.8H1041.5Z" fill="#50567a"/>
 <rect x="1044.8" y="66.8" width="13.5" height="1.3" fill="#50567a"/>
 <!-- fax -->
 <rect x="1080.3" y="56.8" width="5" height="16" rx="2" fill="#5a5e72"/>
 <path d="M1086.5 59.5H1100.5V72.7H1086.5Z" fill="#5a5e72"/>
 <path d="M1087.8 60V53H1096.5L1099 55.8V60" fill="none" stroke="#5a5e72" stroke-width="1.8"/>
 <g fill="#fff">
  <rect x="1089.3" y="62.8" width="1.6" height="1.6"/><rect x="1092.3" y="62.8" width="1.6" height="1.6"/><rect x="1095.3" y="62.8" width="1.6" height="1.6"/>
  <rect x="1089.3" y="65.8" width="1.6" height="1.6"/><rect x="1092.3" y="65.8" width="1.6" height="1.6"/><rect x="1095.3" y="65.8" width="1.6" height="1.6"/>
  <rect x="1089.3" y="68.8" width="1.6" height="1.6"/><rect x="1092.3" y="68.8" width="1.6" height="1.6"/><rect x="1095.3" y="68.8" width="1.6" height="1.6"/>
 </g>
 <!-- rotate left -->
 <g fill="none" stroke="#575b6e" stroke-width="2">
  <path d="M1130 55.3A6.8 6.8 0 0 1 1131.5 69"/>
  <path d="M1128.5 68.8A6.8 6.8 0 0 1 1123.3 61" stroke-dasharray="2.2 2.2"/>
  <path d="M1169 55.3A6.8 6.8 0 0 0 1167.5 69"/>
  <path d="M1170.5 68.8A6.8 6.8 0 0 0 1175.7 61" stroke-dasharray="2.2 2.2"/>
 </g>
 <path d="M1130.5 51.5L1126.8 55.8L1130.5 59.5Z" fill="#575b6e"/>
 <path d="M1168.5 51.5L1172.2 55.8L1168.5 59.5Z" fill="#575b6e"/>
 <!-- sort -->
 <g stroke="#bcbcbc" stroke-width="2">
  <line x1="1199" y1="57" x2="1217" y2="57"/><line x1="1199" y1="62.3" x2="1211" y2="62.3"/><line x1="1199" y1="67.3" x2="1205.3" y2="67.3"/>
 </g>
 <g fill="#565a70">
  <rect x="1237.3" y="55.8" width="5.5" height="5.3"/><rect x="1244.2" y="55.8" width="5.3" height="5.3"/><rect x="1251" y="55.8" width="5.5" height="5.3"/>
  <rect x="1237.3" y="63.3" width="5.5" height="5.5"/><rect x="1244.2" y="63.3" width="5.3" height="5.5"/><rect x="1251" y="63.3" width="5.5" height="5.5"/>
 </g>
</svg>
</body></html>
